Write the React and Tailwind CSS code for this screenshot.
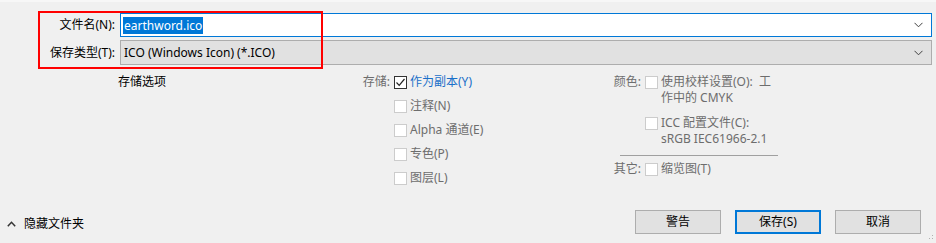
import React from 'react';

const font = { fontFamily: '"Noto Sans", "Noto Sans CJK SC", sans-serif' };

const Chevron = () => (
  <svg width="9" height="6" viewBox="0 0 9 6" className="shrink-0">
    <path d="M0.5 0.8 L4.5 4.8 L8.5 0.8" fill="none" stroke="#404040" strokeWidth="1" />
  </svg>
);

const Box = ({ checked }) => (
  <span
    className={`w-[13px] h-[13px] shrink-0 bg-white border flex items-center justify-center ${
      checked ? 'border-[#333333]' : 'border-[#cccccc]'
    }`}
  >
    {checked && (
      <svg width="11" height="11" viewBox="0 0 11 11">
        <path d="M1.5 5.5 L4.2 8.3 L9.5 2" fill="none" stroke="#222222" strokeWidth="1.2" />
      </svg>
    )}
  </span>
);

const storage = [
  { label: '作为副本(Y)', checked: true },
  { label: '注释(N)' },
  { label: 'Alpha 通道(E)' },
  { label: '专色(P)' },
  { label: '图层(L)' },
];

const Button = ({ children, primary }) => (
  <button
    className={`w-[86px] h-[24px] bg-[#e1e1e1] text-[12px] text-black flex items-center justify-center ${
      primary ? 'border-2 border-[#0078d7]' : 'border border-[#adadad]'
    }`}
  >
    {children}
  </button>
);

export default function App() {
  return (
    <div
      className="w-[936px] h-[243px] bg-[#f0f0f0] relative overflow-hidden flex flex-col text-[12px] text-black"
      style={font}
    >
      <div className="h-[2px] bg-[#f7f7f7]" />

      {/* file name + type */}
      <div className="flex flex-col gap-[3px] pt-[11px] pr-[4px]">
        <div className="flex items-center h-[24px]">
          <span className="w-[115px] text-right">文件名(N):</span>
          <div className="ml-[5px] flex-1 h-[24px] bg-white border border-[#0078d7] flex items-center pl-[2px] pr-[8px]">
            <span className="bg-[#0078d7] text-white leading-[17px] px-[1px]">earthword.ico</span>
            <span className="flex-1" />
            <Chevron />
          </div>
        </div>
        <div className="flex items-center h-[25px]">
          <span className="w-[115px] text-right">保存类型(T):</span>
          <div className="ml-[5px] flex-1 h-[25px] bg-[#e1e1e1] border border-[#adadad] flex items-center pl-[3px] pr-[8px]">
            <span>ICO (Windows Icon) (*.ICO)</span>
            <span className="flex-1" />
            <Chevron />
          </div>
        </div>
      </div>

      {/* options */}
      <div className="flex pl-[118px] mt-[5px]">
        <div className="w-[230px] h-[24px] flex items-center">存储选项</div>

        <div className="w-[252px] flex">
          <span className="w-[42px] h-[24px] flex items-center justify-end text-[#6d6d6d]">存储:</span>
          <div className="ml-[4px] flex flex-col">
            {storage.map((s) => (
              <div key={s.label} className="h-[24px] flex items-center gap-[3px]">
                <Box checked={s.checked} />
                <span className={s.checked ? 'text-[#1a6fc9]' : 'text-[#6d6d6d]'}>{s.label}</span>
              </div>
            ))}
          </div>
        </div>

        <div className="flex flex-col pt-[4px] text-[#6d6d6d] leading-[16px]">
          <div className="flex">
            <span className="w-[41px] text-right">颜色:</span>
            <span className="ml-[4px] mt-[2px]"><Box /></span>
            <div className="ml-[3px]">
              使用校样设置(O):&nbsp; 工<br />作中的 CMYK
            </div>
          </div>
          <div className="flex mt-[9px]">
            <span className="w-[41px]" />
            <span className="ml-[4px] mt-[2px]"><Box /></span>
            <div className="ml-[3px]">
              ICC 配置文件(C):<br />sRGB IEC61966-2.1
            </div>
          </div>
          <div className="ml-[20px] mt-[8px] w-[158px] h-px bg-[#a0a0a0]" />
          <div className="flex mt-[5px]">
            <span className="w-[41px] text-right">其它:</span>
            <span className="ml-[4px] mt-[2px]"><Box /></span>
            <span className="ml-[3px]">缩览图(T)</span>
          </div>
        </div>
      </div>

      {/* bottom */}
      <div className="mt-auto flex items-center pb-[9px] pr-[15px]">
        <div className="flex items-center pl-[7px] mt-[4px] gap-[8px]">
          <svg width="9" height="6" viewBox="0 0 9 6">
            <path d="M0.8 5.2 L4.5 1.3 L8.2 5.2" fill="none" stroke="#333333" strokeWidth="1.5" />
          </svg>
          <span>隐藏文件夹</span>
        </div>
        <div className="ml-auto flex gap-[14px]">
          <Button>警告</Button>
          <Button primary>保存(S)</Button>
          <Button>取消</Button>
        </div>
      </div>

      <svg className="absolute right-[2px] bottom-[3px]" width="5" height="5" viewBox="0 0 5 5">
        <rect x="3" y="0" width="1" height="1" fill="#b0b0b0" />
        <rect x="3" y="3" width="1" height="1" fill="#b0b0b0" />
        <rect x="0" y="3" width="1" height="1" fill="#b0b0b0" />
      </svg>

      {/* annotation overlay */}
      <div className="absolute left-[38px] top-[11px] w-[285px] h-[58px] border-2 border-[#ff0000] pointer-events-none" />
    </div>
  );
}
